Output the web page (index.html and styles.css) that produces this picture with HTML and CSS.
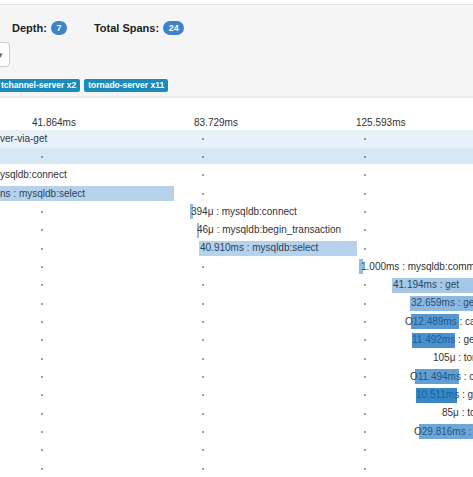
FILE: index.html
```html
<!DOCTYPE html>
<html>
<head>
<meta charset="utf-8">
<link rel="stylesheet" href="styles.css">
</head>
<body>
<div class="panel">
  <div class="stats">
    <span class="stat">Depth: <span class="badge">7</span></span>
    <span class="stat">Total Spans: <span class="badge">24</span></span>
  </div>
  <div class="btn"><span class="caret">▾</span></div>
  <div class="tags">
    <span class="tag">tchannel-server x2</span>
    <span class="tag">tornado-server x11</span>
  </div>
</div>

<div class="timeline">
  <div class="ticks">
    <span class="tick t1">41.864ms</span>
    <span class="tick t2">83.729ms</span>
    <span class="tick t3">125.593ms</span>
  </div>

  <div class="row">
    <span class="bar band-full" style="left:0;width:473px;--a:.095"></span>
    <span class="lbl" style="left:0">ver-via-get</span>
    <span class="mk m2"></span><span class="mk m3"></span>
  </div>
  <div class="row">
    <span class="bar band" style="left:0;width:473px;--a:.16"></span>
    <span class="mk m1"></span><span class="mk m2"></span><span class="mk m3"></span>
  </div>
  <div class="row">
    <span class="lbl" style="left:0">ysqldb:connect</span>
    <span class="mk m2"></span><span class="mk m3"></span>
  </div>
  <div class="row">
    <span class="bar" style="left:0;width:174px;--a:.3"></span>
    <span class="lbl" style="left:0">ns : mysqldb:select</span>
    <span class="mk m2"></span><span class="mk m3"></span>
  </div>
  <div class="row">
    <span class="bar" style="left:190px;width:3px;--a:.45"></span>
    <span class="lbl" style="left:191px">394μ : mysqldb:connect</span>
    <span class="mk m1"></span><span class="mk m3"></span>
  </div>
  <div class="row">
    <span class="bar" style="left:197px;width:2px;--a:.45"></span>
    <span class="lbl" style="left:197px">46μ : mysqldb:begin_transaction</span>
    <span class="mk m1"></span><span class="mk m3"></span>
  </div>
  <div class="row">
    <span class="bar" style="left:199px;width:158px;--a:.3"></span>
    <span class="lbl" style="left:200px">40.910ms : mysqldb:select</span>
    <span class="mk m1"></span><span class="mk m3"></span>
  </div>
  <div class="row">
    <span class="bar" style="left:359px;width:4px;--a:.45"></span>
    <span class="lbl" style="left:361px">1.000ms : mysqldb:commit</span>
    <span class="mk m1"></span><span class="mk m2"></span>
  </div>
  <div class="row">
    <span class="bar" style="left:392px;width:159px;--a:.37"></span>
    <span class="lbl" style="left:393px">41.194ms : get</span>
    <span class="mk m1"></span><span class="mk m2"></span><span class="mk m3"></span>
  </div>
  <div class="row">
    <span class="bar" style="left:410px;width:126px;--a:.47"></span>
    <span class="lbl" style="left:411px">32.659ms : get</span>
    <span class="mk m1"></span><span class="mk m2"></span><span class="mk m3"></span>
  </div>
  <div class="row">
    <span class="bar" style="left:411px;width:48px;--a:.7"></span>
    <span class="lbl" style="left:405px">O12.489ms : call</span>
    <span class="mk m1"></span><span class="mk m2"></span><span class="mk m3"></span>
  </div>
  <div class="row">
    <span class="bar" style="left:412px;width:43px;--a:.75"></span>
    <span class="lbl" style="left:412px">11.492ms : get</span>
    <span class="mk m1"></span><span class="mk m2"></span><span class="mk m3"></span>
  </div>
  <div class="row">
    <span class="lbl" style="left:433px">105μ : tornado</span>
    <span class="mk m1"></span><span class="mk m2"></span><span class="mk m3"></span>
  </div>
  <div class="row">
    <span class="bar" style="left:415px;width:44px;--a:.65"></span>
    <span class="lbl" style="left:410px">O11.494ms : call</span>
    <span class="mk m1"></span><span class="mk m2"></span><span class="mk m3"></span>
  </div>
  <div class="row">
    <span class="bar" style="left:416px;width:41px;--a:.82"></span>
    <span class="lbl" style="left:416px">10.511ms : get</span>
    <span class="mk m1"></span><span class="mk m2"></span><span class="mk m3"></span>
  </div>
  <div class="row">
    <span class="lbl" style="left:442px">85μ : tornado</span>
    <span class="mk m1"></span><span class="mk m2"></span><span class="mk m3"></span>
  </div>
  <div class="row">
    <span class="bar" style="left:419px;width:115px;--a:.6"></span>
    <span class="lbl" style="left:414px">O29.816ms : call</span>
    <span class="mk m1"></span><span class="mk m2"></span><span class="mk m3"></span>
  </div>
  <div class="row">
    <span class="mk m1"></span><span class="mk m2"></span><span class="mk m3"></span>
  </div>
  <div class="row">
    <span class="mk m1"></span><span class="mk m2"></span><span class="mk m3"></span>
  </div>
</div>
</body>
</html>
```

FILE: styles.css
```css
html, body {
  margin: 0;
  padding: 0;
  background: #fff;
}
body {
  width: 473px;
  height: 477px;
  overflow: hidden;
  font-family: "Liberation Sans", Arial, sans-serif;
  color: #333;
}

.panel {
  margin-top: 4px;
  border-top: 1px solid #e4e4e4;
  border-bottom: 2px solid #ebebeb;
  background: #f5f5f5;
  padding: 16px 0 4px;
  height: 71px;
}

.stats {
  display: flex;
  align-items: center;
  height: 14px;
  margin-left: 12px;
  font-size: 11px;
  font-weight: bold;
  color: #222;
}
.stat {
  display: flex;
  align-items: center;
  white-space: pre;
}
.stat + .stat {
  margin-left: 27px;
}
.badge {
  display: inline-flex;
  align-items: center;
  justify-content: center;
  height: 14px;
  padding: 0 5.5px;
  margin-left: 1px;
  border-radius: 7px;
  background: #3d85c6;
  color: #fff;
  font-size: 9px;
  font-weight: bold;
}

.btn {
  margin-top: 7px;
  margin-left: -40px;
  width: 50px;
  height: 25px;
  box-sizing: border-box;
  border: 1px solid #ccc;
  border-radius: 4px;
  background: #fff;
  display: flex;
  align-items: center;
  justify-content: flex-end;
  padding-right: 6px;
}
.caret {
  font-size: 9px;
  color: #666;
}

.tags {
  display: flex;
  gap: 4px;
  margin-top: 12px;
  margin-left: -3px;
}
.tag {
  height: 13px;
  line-height: 13px;
  padding: 0 4px;
  border-radius: 2px;
  background: #1b8bbb;
  color: #fff;
  font-size: 8.5px;
  font-weight: bold;
  white-space: nowrap;
}

.timeline {
  margin-top: 13.2px;
  font-size: 10px;
}
.ticks {
  position: relative;
  height: 18.33px;
}
.tick {
  position: absolute;
  top: 3px;
  line-height: 18.33px;
  white-space: nowrap;
  color: #333;
}
.t1 { left: 32px; }
.t2 { left: 194px; }
.t3 { left: 356px; }

.row {
  position: relative;
  height: 18.33px;
}
.lbl {
  position: absolute;
  top: 0;
  line-height: 18.33px;
  white-space: nowrap;
  z-index: 1;
  color: #333;
}
.bar {
  position: absolute;
  top: 1.67px;
  height: 15px;
  z-index: 2;
  background: rgba(14, 107, 187, var(--a));
}
.bar.band-full {
  top: 0;
  height: 100%;
}
.bar.band {
  top: 0;
  height: 16.5px;
}
.mk {
  position: absolute;
  top: calc(50% - 1px);
  width: 2px;
  height: 2px;
  background: #a0a0a0;
  z-index: 0;
}
.m1 { left: 41px; }
.m2 { left: 202px; }
.m3 { left: 364px; }
```
